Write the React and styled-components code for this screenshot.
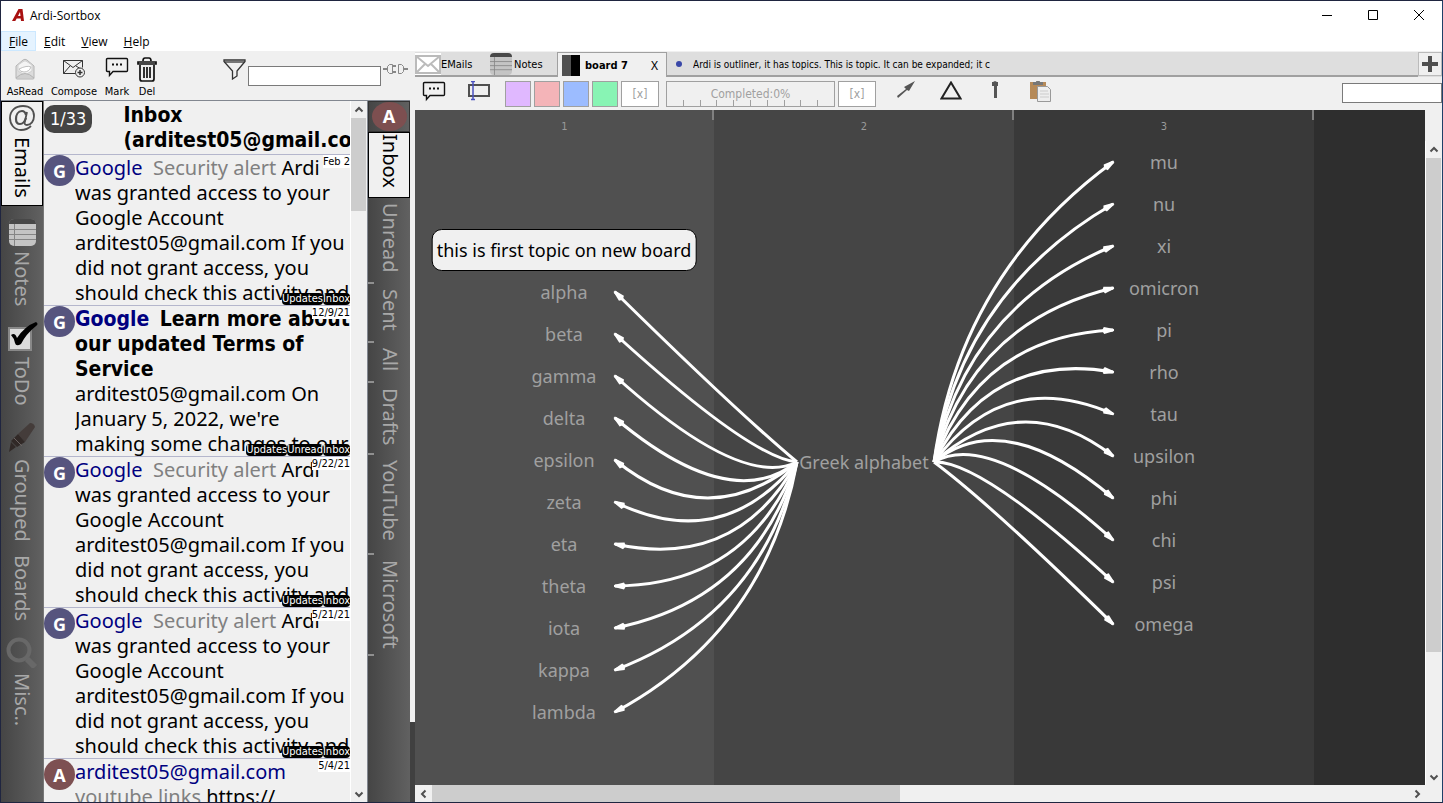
import React from "react";
import styled, { createGlobalStyle, css } from "styled-components";

const ui = '"DejaVu Sans Condensed", "Noto Sans", sans-serif';
const reading = '"Noto Sans", "DejaVu Sans Condensed", sans-serif';
const chrome = '"Open Sans", "Noto Sans", sans-serif';

const Global = createGlobalStyle`
  * { box-sizing: border-box; }
  body { margin: 0; background: #f0f0f0; color: #000; font-family: ${ui}; font-size: 11px; }
  button, input { font: inherit; color: inherit; margin: 0; padding: 0; border-radius: 0; }
  button { background: none; border: 0; }
  svg { display: block; flex: none; }
`;

const Window = styled.div`
  display: flex;
  flex-direction: column;
  height: 100vh;
  overflow: hidden;
  border: 1px solid #1f2540;
  border-right-color: #1f4068;
  background: #f0f0f0;
`;
const TitleBar = styled.header`
  display: flex;
  align-items: center;
  height: 30px;
  flex: none;
  padding: 0 0 2px 11px;
  background: #fff;
  font: 12px ${chrome};
`;
const AppName = styled.span`
  flex: 1;
  padding-left: 5px;
`;
const CaptionButton = styled.button`
  display: grid;
  place-items: center;
  width: 46px;
  height: 28px;
`;
const MenuBar = styled.nav`
  display: flex;
  height: 20px;
  flex: none;
  background: #fff;
  font: 12px ${chrome};
`;
const MenuItem = styled.button`
  padding: 0 8px;
  background: ${(p) => (p.$on ? "#e5f3ff" : "transparent")};
  box-shadow: ${(p) => (p.$on ? "inset 0 0 0 1px #cce8ff" : "none")};
`;
const Body = styled.div`
  display: flex;
  flex: 1;
  min-height: 0;
`;
const MailPane = styled.section`
  display: flex;
  flex-direction: column;
  width: 409px;
  flex: none;
`;
const MailTools = styled.div`
  display: flex;
  height: 50px;
  flex: none;
  padding-left: 4px;
  border-bottom: 1px solid #828790;
`;
const Tool = styled.button`
  display: flex;
  flex-direction: column;
  align-items: center;
  justify-content: space-between;
  padding: 6px 0 1px;
  width: ${(p) => p.$w}px;
  font-size: 11px;
  line-height: 14px;
  white-space: nowrap;
`;
const Filter = styled.label`
  display: flex;
  flex: 1;
  align-items: flex-start;
  justify-content: flex-end;
  padding: 8px 2px 0 0;
  gap: 2px;
`;
const Field = styled.input`
  width: ${(p) => p.$w}px;
  height: 20px;
  margin-top: ${(p) => p.$top || 0}px;
  border: 1px solid #7a7a7a;
  background: #fff;
`;
const FilterIcon = styled.span`
  padding-top: ${(p) => p.$top || 0}px;
`;
const MailBody = styled.div`
  display: flex;
  flex: 1;
  min-height: 0;
`;
const SideBar = styled.nav`
  width: 43px;
  flex: none;
  border-right: 1px solid #777;
  background: linear-gradient(90deg, #454545, #616161);
`;
const SideItem = styled.button`
  display: flex;
  flex-direction: column;
  align-items: center;
  width: 42px;
  height: ${(p) => p.$h}px;
  padding-top: ${(p) => p.$pad}px;
  gap: 5px;
  color: #a8a8a8;
  ${(p) => p.$on && css`
    background: #f0f0f0;
    color: #000;
    border: 1px solid #000;
  `}
`;
const Vertical = styled.span`
  writing-mode: vertical-rl;
  font-family: ${reading};
  font-size: 20px;
  line-height: 24px;
  text-align: start;
  white-space: nowrap;
`;
const List = styled.div`
  flex: 1;
  min-width: 0;
  overflow: hidden;
`;
const ListHead = styled.div`
  display: flex;
  height: 53px;
  gap: 31px;
  padding-top: 2px;
`;
const Counter = styled.span`
  height: 28px;
  padding: 0 6px;
  margin-top: 2px;
  border-radius: 10px;
  background: #444;
  color: #fff;
  font-size: 18px;
  line-height: 28px;
`;
const Heading = styled.h1`
  margin: 0;
  font-size: 21px;
  line-height: 25px;
  white-space: nowrap;
`;
const Mail = styled.article`
  position: relative;
  display: flex;
  height: 151px;
  border-top: 1px solid #b4b6cc;
`;
const Avatar = styled.span`
  display: grid;
  place-items: center;
  width: 31px;
  height: 31px;
  flex: none;
  border-radius: 50%;
  background: ${(p) => p.$c};
  color: #fff;
  font: bold 18px/28px ${reading};
`;
const MailText = styled.div`
  flex: 1;
  min-width: 0;
  overflow: hidden;
  white-space: pre;
  font-family: ${reading};
  font-size: 20px;
  line-height: 25px;
`;
const strong = css`
  font-family: ${ui};
  font-size: 21px;
  font-weight: bold;
  line-height: 24px;
`;
const Sender = styled.span`
  color: #000080;
  ${(p) => p.$b && strong}
`;
const Subject = styled.span`
  color: ${(p) => (p.$b ? "#000" : "#808080")};
  ${(p) => p.$b && strong}
`;
const DateTag = styled.time`
  position: absolute;
  top: 0;
  right: 0;
  background: #fff;
  font-size: 11px;
  line-height: 13px;
`;
const Tags = styled.div`
  position: absolute;
  right: 0;
  bottom: 0;
  display: flex;
`;
const Tag = styled.span`
  border-radius: 4px;
  background: #000;
  color: #fff;
  font-size: 11px;
  line-height: 12px;
`;
const Scroll = styled.div`
  display: flex;
  flex: ${(p) => (p.$row ? 1 : "none")};
  flex-direction: ${(p) => (p.$row ? "row" : "column")};
  ${(p) => (p.$row ? "height: 17px;" : "width: 17px;")}
  background: #f0f0f0;
  border-left: ${(p) => (p.$row ? "0" : "1px solid #fff")};
`;
const Arrow = styled.button`
  display: grid;
  place-items: center;
  width: ${(p) => (p.$row ? 17 : 15)}px;
  height: 17px;
  flex: none;
`;
const Track = styled.div`flex: 1;`;
const Thumb = styled.div`
  background: #cdcdcd;
  ${(p) => (p.$row ? "height: 100%; width" : "width: 15px; height")}: ${(p) => p.$len}%;
`;
const FolderBar = styled.nav`
  width: 43px;
  flex: none;
  border-left: 1px solid #828790;
  background: linear-gradient(90deg, #454545, #616161);
`;
const Account = styled.div`
  display: grid;
  place-items: center;
  height: 31px;
  border: 1px solid #333;
`;
const AccountMark = styled.span`
  width: 35px;
  height: 29px;
  border-radius: 50%;
  background: #7d4f50;
  color: #fff;
  text-align: center;
  font: bold 18px/28px ${reading};
`;
const Folder = styled.button`
  position: relative;
  display: flex;
  justify-content: center;
  width: 100%;
  height: ${(p) => p.$h}px;
  padding: ${(p) => (p.$on ? 1 : 5)}px 0 0 2px;
  color: ${(p) => (p.$on ? "#000" : "#a8a8a8")};
  ${(p) => p.$on
    ? css`background: #f0f0f0; border: 1px solid #000;`
    : css`&::after { content: ""; position: absolute; left: 0; bottom: 0; width: 6px; height: 2px; background: #909090; }`}
`;
const Splitter = styled.div`
  width: 5px;
  flex: none;
  background: linear-gradient(#f0f0f0 671px, #404040 671px);
`;
const BoardPane = styled.main`
  display: flex;
  flex: 1;
  min-width: 0;
  flex-direction: column;
`;
const TabBar = styled.div`
  display: flex;
  height: 25px;
  flex: none;
  margin-top: 1px;
  background: #dedede;
`;
const Tab = styled.button`
  display: flex;
  align-items: center;
  width: ${(p) => p.$w}px;
  flex: ${(p) => (p.$grow ? 1 : "none")};
  padding: 0 ${(p) => p.$pad || 0}px;
  gap: ${(p) => p.$gap || 0}px;
  white-space: nowrap;
  border-bottom: 2px solid #a0a0a0;
  ${(p) => p.$on && css`
    background: #f0f0f0;
    border: 1px solid #a0a0a0;
    border-bottom: 0;
    font-weight: bold;
  `}
`;
const TabText = styled.span`
  padding-top: ${(p) => (p.$on ? 0 : 2)}px;
  text-align: left;
  ${(p) => p.$topic && css`
    width: 313px;
    overflow: hidden;
    font-size: 10px;
  `}
`;
const Close = styled.span`
  margin-left: auto;
  padding-right: 4px;
  font: 12px ${reading};
`;
const AddTab = styled.button`
  display: grid;
  place-items: center;
  width: 24px;
  height: 24px;
  border: 1px solid #bbb;
  background: #f0f0f0;
`;
const BoardTools = styled.div`
  display: flex;
  height: 33px;
  flex: none;
  padding-top: 4px;
  gap: 3px;
`;
const IconButton = styled.button`
  display: flex;
  justify-content: center;
  width: ${(p) => p.$w}px;
  height: 24px;
`;
const Swatch = styled.button`
  width: 26px;
  height: 26px;
  border: 1px solid #a0a0a0;
  background: ${(p) => p.$c};
`;
const Clear = styled.button`
  width: 38px;
  height: 26px;
  border: 1px solid #a0a0a0;
  background: #fff;
  color: #a0a0a0;
  font-size: 12px;
`;
const Progress = styled.label`
  position: relative;
  width: 169px;
  height: 26px;
  margin-left: 4px;
  border: 1px solid #a0a0a0;
  color: #a0a0a0;
  font-size: 12px;
  line-height: 24px;
  text-align: center;
`;
const Ruler = styled.span`
  position: absolute;
  inset: auto 0 0 0;
  display: flex;
  justify-content: space-evenly;
`;
const Notch = styled.span`
  width: 1px;
  height: 6px;
  background: #a0a0a0;
`;
const Range = styled.input`
  position: absolute;
  inset: 0;
  width: 100%;
  opacity: 0;
`;
const Spacer = styled.div`flex: 1;`;
const BoardRow = styled.div`
  display: flex;
  flex: 1;
  min-height: 0;
`;
const Canvas = styled.div`
  position: relative;
  flex: 1;
  min-width: 0;
  display: flex;
  overflow: hidden;
  background: #2e2e2e;
`;
const Lane = styled.div`
  width: ${(p) => p.$w}px;
  flex: none;
  padding-top: 9px;
  background:
    linear-gradient(#808080, #808080) right top / 2px 10px no-repeat,
    ${(p) => p.$c};
  color: #9a9a9a;
  font-size: 11px;
  line-height: 16px;
  text-align: center;
`;
const Links = styled.svg`
  position: absolute;
  left: 0;
  top: 0;
`;
const Node = styled.span.attrs((p) => ({ style: { left: p.$x, top: p.$y } }))`
  position: absolute;
  transform: translate(-50%, -50%);
  color: #a0a0a0;
  font-family: ${reading};
  font-size: 18px;
  line-height: 24px;
  white-space: nowrap;
  ${(p) => p.$topic && css`
    padding: 8px 4px;
    border: 1px solid #000;
    border-radius: 10px;
    background: #f0f0f0;
    color: #000;
  `}
`;
const ScrollColumn = styled.div`
  display: flex;
  flex: none;
  padding-top: 31px;
  background: #f0f0f0;
`;
const Footer = styled.div`
  display: flex;
  flex: none;
  padding-right: 17px;
  background: #f0f0f0;
`;

const chevrons = {
  up: "M1.5 6.5 5 3l3.500 3.500",
  down: "M1.500 3.500 5 7l3.500-3.500",
  left: "M6.500 1.500 3 5l3.500 3.500",
  right: "M3.500 1.500 7 5 3.500 8.500",
};
const ScrollArrow = ({ to, row }) => (
  <Arrow $row={row} aria-label={`Scroll ${to}`}>
    <svg width="10" height="10"><path d={chevrons[to]} fill="none" stroke="#505050" strokeWidth="2" /></svg>
  </Arrow>
);
const Bar = ({ row, len }) => (
  <Scroll $row={row}>
    <ScrollArrow row={row} to={row ? "left" : "up"} />
    <Track><Thumb $row={row} $len={len} /></Track>
    <ScrollArrow row={row} to={row ? "right" : "down"} />
  </Scroll>
);

const ReadIcon = () => (
  <svg width="24" height="24" viewBox="0 0 24 24">
    <path d="M3 9 10 3q2-1.500 4 0l7 6v12q0 1-1 1H4q-1 0-1-1z" fill="#dcdcdc" stroke="#b4b4b4" />
    <path d="M5 8 11 4h2l6 4v6l-7 4-7-4z" fill="#f4f4f4" stroke="#d0d0d0" />
    <path d="M3 21q9-9 18 0" fill="#cfcfcf" stroke="#b4b4b4" />
    <path d="M6 12q8-4 12-2-2 5-7 5-4 0-5-3z" fill="#fff" stroke="#c0c0c0" />
  </svg>
);
const ComposeIcon = () => (
  <svg width="24" height="22" viewBox="0 0 24 22" fill="none" stroke="#333">
    <path d="M13 16.500H1.500v-13h19v7M1.500 3.500l9.500 7 9.500-7M1.500 16.500 8 9M20.500 13 14 9" />
    <circle cx="18" cy="15.500" r="4.500" fill="#f0f0f0" /><path d="M18 13v5M15.500 15.500h5" strokeWidth="1.500" />
  </svg>
);
const ChatIcon = () => (
  <svg width="24" height="22" viewBox="0 0 24 22" fill="none" stroke="#111" strokeWidth="1.400">
    <path d="M1.500 2.500q0-1 1-1h19q1 0 1 1v11q0 1-1 1H8L4.500 18.500v-4h-2q-1 0-1-1z" />
    <path d="M7 7.500h2M11 7.500h2M15 7.500h2" strokeWidth="2" />
  </svg>
);
const TrashIcon = () => (
  <svg width="20" height="25" viewBox="0 0 20 25" fill="none" stroke="#111" strokeWidth="1.700">
    <path d="M1 5h18v2H1zM6 4q0-3 2-3h4q2 0 2 3M3 8v14q0 2 2 2h10q2 0 2-2V8M7 10v11M10 10v11M13 10v11" />
  </svg>
);
const FunnelIcon = () => (
  <svg width="23" height="21" viewBox="0 0 23 21" fill="none" stroke="#333" strokeWidth="1.300">
    <path d="M1 2.500V1h21v1.500L14 12v5l-4.500 3v-8z" /><path d="M1.500 3h20" />
  </svg>
);
const PlugIcon = () => (
  <svg width="25" height="14" viewBox="0 0 25 14" fill="#f0f0f0" stroke="#888">
    <path d="M0 7h5M20 7h5M10 4h3M10 10h3" strokeWidth="2" />
    <path d="M9.500 2.500h-3l-2 2v5l2 2h3zM15.500 2.500h3l2 2v5l-2 2h-3z" />
  </svg>
);
const AtIcon = () => (
  <svg width="28" height="28" viewBox="0 0 28 28" fill="none" stroke="#505050" strokeWidth="1.800">
    <path d="M23 22q-4 4-10 4C6 26 2 20 2 14 2 7 7 2 15 2c7 0 11 4 11 10 0 5-3 9-7 9-2 0-3-1-2-4l2-9" />
    <path d="M18 11q-1-4-4-4c-4 0-6 4-6 8 0 3 1 5 4 5s5-3 6-6" strokeWidth="2.200" />
  </svg>
);
const NotesIcon = ({ size = 27 }) => (
  <svg width={size} height={size} viewBox="0 0 27 27">
    <rect width="27" height="27" rx="5" fill="#c4c4c4" />
    <path d="M0 5q0-5 5-5h17q5 0 5 5z" fill="#484848" />
    <path d="M0 10.500h27M0 15.500h27M0 20.500h27M5.500 5v22" stroke="#858585" />
  </svg>
);
const CheckIcon = () => (
  <svg width="32" height="30" viewBox="0 0 32 30">
    <rect x="3" y="6" width="22" height="22" fill="#dcdcdc" stroke="#888" strokeWidth="2" />
    <path d="M5 13q4-3 6 3Q19 4 30 0q3 2 0 4-10 8-15 18-5 3-6-1-1-5-4-8z" fill="#000" />
  </svg>
);
const MarkerIcon = () => (
  <svg width="28" height="32" viewBox="0 0 28 32">
    <path d="M10 12 22 1q4 0 5 4L17 20z" fill="#443c3a" />
    <path d="m10 12 7 8-8 5-6-6zM3 20l5 5-7 5z" fill="#312927" />
    <path d="m6 16 8 8" stroke="#6b6260" />
  </svg>
);
const LensIcon = () => (
  <svg width="32" height="34" viewBox="0 0 32 34" fill="none" stroke="#686868">
    <circle cx="13" cy="16" r="10.500" strokeWidth="4" /><path d="m21 25 8 8" strokeWidth="6" />
  </svg>
);

const sideItems = [
  ["Emails", 105, 2, AtIcon],
  ["Notes", 104, 13, NotesIcon],
  ["ToDo", 101, 12, CheckIcon],
  ["Grouped", 135, 11, MarkerIcon],
  ["Boards", 82, 9, null],
  ["Misc..", 110, 6, LensIcon],
];
const folders = [
  ["Inbox", 66], ["Unread", 86], ["Sent", 59], ["All", 40],
  ["Drafts", 72], ["YouTube", 100], ["Microsoft", 101],
];
const alertText = "Ardi\nwas granted access to your\nGoogle Account\narditest05@gmail.com If you\ndid not grant access, you\nshould check this activity and";
const alert = (date) => ({ from: "Google", subject: "Security alert", text: " " + alertText, date, tags: ["Updates", "Inbox"] });
const mails = [
  alert("Feb 2"),
  {
    from: "Google", bold: true, subject: "Learn more about\nour updated Terms of\nService",
    text: "\narditest05@gmail.com On\nJanuary 5, 2022, we're\nmaking some changes to our",
    date: "12/9/21", tags: ["Updates", "Unread", "Inbox"],
  },
  alert("9/22/21"),
  alert("5/21/21"),
  { from: "arditest05@gmail.com", subject: "youtube links", text: " https://", date: "5/4/21", tags: [], self: true },
];

const leftNames = ["alpha", "beta", "gamma", "delta", "epsilon", "zeta", "eta", "theta", "iota", "kappa", "lambda"];
const rightNames = ["mu", "nu", "xi", "omicron", "pi", "rho", "tau", "upsilon", "phi", "chi", "psi", "omega"];

// Control point offset from the chord's middle; `rise` is how far the end lies on the flat side of the root.
const bend = (dx, dy, side) => {
  const rise = -dy * side;
  if (rise > 0) {
    const stops = [[0, 0, 74], [43, 24, 75], [85, 35, 71], [128, 45, 60], [170, 30, 34]];
    const i = Math.min(3, stops.findIndex((s) => s[0] > rise) - 1);
    const a = stops[i < 0 ? 3 : i];
    const b = stops[i < 0 ? 4 : i + 1];
    const t = Math.min(1, (rise - a[0]) / (b[0] - a[0]));
    return [side * (a[1] + (b[1] - a[1]) * t), side * (a[2] + (b[2] - a[2]) * t)];
  }
  const len = Math.hypot(dx, dy);
  return [(side * 74 * Math.abs(dy)) / len, (side * 74 * Math.abs(dx)) / len];
};
const Link = ({ from, to, side }) => {
  const dx = to[0] - from[0];
  const dy = to[1] - from[1];
  const [ox, oy] = bend(dx, dy, side);
  const cx = from[0] + dx / 2 + ox;
  const cy = from[1] + dy / 2 + oy;
  const angle = (Math.atan2(to[1] - cy, to[0] - cx) * 180) / Math.PI;
  return (
    <g>
      <path d={`M${from} Q${cx} ${cy} ${to}`} fill="none" stroke="#fff" strokeWidth="3" />
      <path d="M1-1-9-3.500-11 0-9 3.500 1 1z" fill="#fff" transform={`translate(${to}) rotate(${angle})`} />
    </g>
  );
};

const MailTool = ({ label, w, children }) => <Tool $w={w}>{children}{label}</Tool>;

export default function App() {
  return (
    <Window>
      <Global />
      <TitleBar>
        <svg width="13" height="12" viewBox="0 0 13 12"><path d="M0 12 6.500 0h4L12 12H9l-.3-2.500H4.700L3.300 12zM6 7h2.500L8 3z" fill="#a81010" fillRule="evenodd" /></svg>
        <AppName>Ardi-Sortbox</AppName>
        <CaptionButton aria-label="Minimize"><svg width="10" height="10"><path d="M0 5.500h10" stroke="#000" /></svg></CaptionButton>
        <CaptionButton aria-label="Maximize"><svg width="10" height="10"><path d="M.5.500h9v9h-9z" fill="none" stroke="#000" /></svg></CaptionButton>
        <CaptionButton aria-label="Close"><svg width="10" height="10"><path d="m0 0 10 10M10 0 0 10" stroke="#000" /></svg></CaptionButton>
      </TitleBar>
      <MenuBar>
        {["File", "Edit", "View", "Help"].map((m, i) => (
          <MenuItem key={m} $on={i === 0}><u>{m[0]}</u>{m.slice(1)}</MenuItem>
        ))}
      </MenuBar>
      <Body>
        <MailPane>
          <MailTools>
            <MailTool label="AsRead" w={40}><ReadIcon /></MailTool>
            <MailTool label="Compose" w={58}><ComposeIcon /></MailTool>
            <MailTool label="Mark" w={28}><ChatIcon /></MailTool>
            <MailTool label="Del" w={32}><TrashIcon /></MailTool>
            <Filter>
              <FunnelIcon />
              <Field $w={133} $top={7} aria-label="Filter mail" />
              <FilterIcon $top={3}><PlugIcon /></FilterIcon>
            </Filter>
          </MailTools>
          <MailBody>
            <SideBar>
              {sideItems.map(([name, h, pad, Icon], i) => (
                <SideItem key={name} $h={h} $pad={pad} $on={i === 0}>
                  {Icon && <Icon />}
                  <Vertical>{name}</Vertical>
                </SideItem>
              ))}
            </SideBar>
            <List>
              <ListHead>
                <Counter>1/33</Counter>
                <Heading>Inbox<br />(arditest05@gmail.co</Heading>
              </ListHead>
              {mails.map((m) => (
                <Mail key={m.date}>
                  <Avatar $c={m.self ? "#7d5052" : "#56547e"}>{m.self ? "A" : "G"}</Avatar>
                  <MailText>
                    <Sender $b={m.bold}>{m.from}</Sender>{m.self ? "\n" : "  "}
                    <Subject $b={m.bold}>{m.subject}</Subject>{m.text}
                  </MailText>
                  <DateTag>{m.date}</DateTag>
                  <Tags>{m.tags.map((t) => <Tag key={t}>{t}</Tag>)}</Tags>
                </Mail>
              ))}
            </List>
            <Bar len={14} />
            <FolderBar>
              <Account><AccountMark>A</AccountMark></Account>
              {folders.map(([name, h], i) => (
                <Folder key={name} $h={h} $on={i === 0}><Vertical>{name}</Vertical></Folder>
              ))}
            </FolderBar>
          </MailBody>
        </MailPane>
        <Splitter />
        <BoardPane>
          <TabBar>
            <Tab $w={75}>
              <svg width="26" height="22" viewBox="0 0 26 22"><path d="M0 0h26v22H0z" fill="#fff" /><path d="M1 3h24v17H1zM1 3l12 10L25 3M1 20l9-9M25 20l-9-9" fill="none" stroke="#bbb" strokeWidth="2" /></svg>
              <TabText>EMails</TabText>
            </Tab>
            <Tab $w={67} $gap={2}>
              <NotesIcon size={22} />
              <TabText>Notes</TabText>
            </Tab>
            <Tab $w={110} $pad={4} $gap={5} $on>
              <svg width="18" height="21"><path d="M0 0h9v21H0z" fill="#505050" /><path d="M9 0h9v21H9z" /></svg>
              <TabText $on>board 7</TabText>
              <Close>X</Close>
            </Tab>
            <Tab $grow $pad={9} $gap={11}>
              <svg width="6" height="6"><circle cx="3" cy="3" r="3" fill="#3a48a8" /></svg>
              <TabText $topic>Ardi is outliner, it has topics. This is topic. It can be expanded; it c</TabText>
            </Tab>
            <AddTab aria-label="Add board"><svg width="16" height="16"><path d="M8 0v16M0 8h16" stroke="#505050" strokeWidth="4" /></svg></AddTab>
          </TabBar>
          <BoardTools>
            <IconButton $w={37} aria-label="Comment"><ChatIcon /></IconButton>
            <IconButton $w={47} aria-label="Text box">
              <svg width="24" height="22" viewBox="0 0 24 22" fill="none"><path d="M2 4h20v11H2z" stroke="#505050" strokeWidth="2" /><path d="M4 .5h4M4 18.500h4M6 .5v18" stroke="#4a50c0" strokeWidth="1.500" /></svg>
            </IconButton>
            {["#e0b8ff", "#f4b4b8", "#9cbcff", "#88f4b4"].map((c) => <Swatch key={c} $c={c} aria-label={`Colour ${c}`} />)}
            <Clear>[x]</Clear>
            <Progress>
              Completed:0%
              <Ruler>{Array.from({ length: 9 }, (_, i) => <Notch key={i} />)}</Ruler>
              <Range type="range" defaultValue={0} />
            </Progress>
            <Clear>[x]</Clear>
            <IconButton $w={54} aria-label="Arrow">
              <svg width="18" height="18" viewBox="0 0 18 18"><path d="m0 15 9-7-2-2 11-6-6 10-2-1-9 8z" fill="#555" /></svg>
            </IconButton>
            <IconButton $w={30} aria-label="Shape">
              <svg width="22" height="19" viewBox="0 0 22 19"><path d="M11 1.500 20.500 17.500H1.500z" fill="none" stroke="#222" strokeWidth="2" /></svg>
            </IconButton>
            <IconButton $w={52} aria-label="Pin">
              <svg width="8" height="18" viewBox="0 0 8 18"><path d="M1 1h1l2-1 2 1h1v4H1z" fill="#555" /><path d="M3 4h3v13H3z" fill="#555" /></svg>
            </IconButton>
            <IconButton $w={34} aria-label="Paste">
              <svg width="22" height="23" viewBox="0 0 22 23"><path d="M0 1h16v17H0z" fill="#b68a58" /><path d="M3 1h3q0-1.500 2-1.500T10 1h3v3H3z" fill="#777" /><path d="M7.500 5.500h10l3 3v12h-13z" fill="#eee" stroke="#999" /><path d="M10 10h8M10 13h9M10 16h9" stroke="#ccc" /></svg>
            </IconButton>
            <Spacer />
            <Field $w={100} $top={2} aria-label="Search board" />
          </BoardTools>
          <BoardRow>
            <Canvas>
              <Lane $w={299} $c="#505050">1</Lane>
              <Lane $w={300} $c="#454545">2</Lane>
              <Lane $w={300} $c="#393939">3</Lane>
              <Links width="899" height="674">
                {leftNames.map((n, i) => <Link key={n} from={[382, 352]} to={[200, 182 + i * 42]} side={1} />)}
                {rightNames.map((n, i) => <Link key={n} from={[519, 352]} to={[698, 52 + i * 42]} side={-1} />)}
              </Links>
              <Node $topic $x={149} $y={140}>this is first topic on new board</Node>
              {leftNames.map((n, i) => <Node key={n} $x={149} $y={182 + i * 42}>{n}</Node>)}
              {rightNames.map((n, i) => <Node key={n} $x={749} $y={52 + i * 42}>{n}</Node>)}
              <Node $x={449} $y={352}>Greek alphabet</Node>
            </Canvas>
            <ScrollColumn><Bar len={81} /></ScrollColumn>
          </BoardRow>
          <Footer><Bar row len={48} /></Footer>
        </BoardPane>
      </Body>
    </Window>
  );
}
